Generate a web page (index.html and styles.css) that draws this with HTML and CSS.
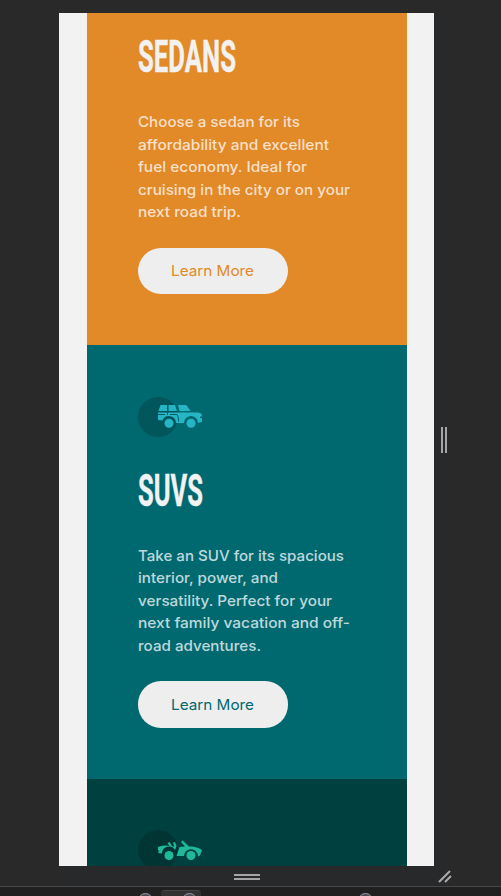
FILE: index.html
```html
<!DOCTYPE html>
<html lang="en"><head><meta charset="utf-8"><title>Car cards</title><link rel="stylesheet" href="styles.css"></head>
<body>
<div class="stage">
<main class="device">
<section class="card sedans">
<h2><svg width="120" height="40"><text x="0" y="34" textLength="98" lengthAdjust="spacingAndGlyphs">SEDANS</text></svg></h2>
<p><svg width="230" height="113"><text y="15" textLength="162" lengthAdjust="spacingAndGlyphs">Choose a sedan for its</text><text y="38" textLength="191" lengthAdjust="spacingAndGlyphs">affordability and excellent</text><text y="60" textLength="169" lengthAdjust="spacingAndGlyphs">fuel economy. Ideal for</text><text y="83" textLength="212" lengthAdjust="spacingAndGlyphs">cruising in the city or on your</text><text y="105" textLength="103" lengthAdjust="spacingAndGlyphs">next road trip.</text></svg></p>
<a class="button"><svg width="84" height="24"><text y="17" textLength="83" lengthAdjust="spacingAndGlyphs">Learn More</text></svg></a>
</section>
<section class="card suvs">
<svg class="icon" width="64" height="40"><circle cx="20" cy="20" r="20" fill="#000" fill-opacity=".18"/><g fill="#26b5c4"><path d="M22.500 8H29v6h-8.500zM30.500 8H37l2 6h-8.500zM40 8h7.500q1 0 1.500 1l3.500 5H41.500zM20 15.500H60q4 .5 4 3v1h-2v1.500h2v4l-4 1a7 7 0 0 0-14 0H38a7 7 0 0 0-13.500-2.500L20 23z"/><path d="M20 17.500h7M32 17.500h7q2 3 1.500 7M29.500 14v4" fill="none" stroke="#006068"/><circle cx="31" cy="26.300" r="4.500"/><circle cx="53" cy="26.300" r="4.500"/></g></svg>
<h2><svg width="120" height="40"><text x="0" y="34" textLength="65" lengthAdjust="spacingAndGlyphs">SUVS</text></svg></h2>
<p><svg width="230" height="113"><text y="15" textLength="206" lengthAdjust="spacingAndGlyphs">Take an SUV for its spacious</text><text y="37" textLength="140" lengthAdjust="spacingAndGlyphs">interior, power, and</text><text y="60" textLength="194" lengthAdjust="spacingAndGlyphs">versatility. Perfect for your</text><text y="82" textLength="212" lengthAdjust="spacingAndGlyphs">next family vacation and off-</text><text y="105" textLength="123" lengthAdjust="spacingAndGlyphs">road adventures.</text></svg></p>
<a class="button"><svg width="84" height="24"><text y="17" textLength="83" lengthAdjust="spacingAndGlyphs">Learn More</text></svg></a>
</section>
<section class="card luxury">
<svg class="icon" width="64" height="40"><circle cx="20" cy="20" r="20" fill="#000" fill-opacity=".18"/><g fill="#1fb99a"><path d="M20 17q4-2 7.500-1.500l4 .5-2-3 2-1 3 4.500h1.500l-1-4 2-.5 1.500 4-1.500 4a7 7 0 0 0-13 3.500L20 23l1-2-1-1zM38.500 26l3-9 5.500-.5-4-4.500 1.500-1.500L51 16.500c6 0 12 2 13 4l-2 5-2 1a7 7 0 0 0-14-.5z"/><circle cx="31" cy="25.500" r="4.500"/><circle cx="53" cy="25.500" r="4.500"/></g></svg>
</section>
</main>
<div class="side"><i></i><i></i></div>
</div>
<div class="bottom"><div class="grip"><i></i><i></i></div><svg class="corner" width="14" height="14"><path d="M1 12L12 1M7 12l6-6" stroke="#aaa" stroke-width="2"/></svg></div>
<footer><b></b><span><b></b></span><b></b></footer>
</body></html>
```
FILE: styles.css
```css
*{box-sizing:border-box}
body{margin:0;width:501px;height:896px;overflow:hidden;background:#292929;padding-top:13px;font-family:Inter,"Liberation Sans",sans-serif}
svg{display:block;overflow:visible}
.stage{display:flex;height:853px;padding-left:59px}
.device{width:375px;height:853px;overflow:hidden;background:#f2f2f2;padding:0 27px 0 28px}
.card{padding:52px 51px 51px;height:434px}
.sedans{background:#e28928;height:332px;padding-top:25px;color:#e28928}
.suvs{background:#006970;color:#006970}
.luxury{background:#004140;padding-top:51px}
.icon{margin-bottom:35px}
h2{margin:0;height:40px}
h2 text{font:700 45px Roboto,sans-serif;fill:#f2f2f2;stroke:#f2f2f2;stroke-width:.4px}
p{margin:34px 0 0;height:113px}
p text{font-size:14.7px;font-weight:500;fill:#fff;fill-opacity:.75}
.button{display:flex;align-items:center;justify-content:center;width:150px;height:46px;margin-top:23px;border-radius:23px;background:#eee}
.suvs .button{height:47px;margin-top:22px}
.button text{font-size:14.7px;fill:currentColor}
.side{width:20px;background:#28292b;display:flex;align-items:center;justify-content:center;gap:2px}
.side i{width:2px;height:26px;background:#a5a5a5}
.bottom{height:20px;margin-left:59px;width:395px;background:#28292b;display:flex;align-items:center;padding:2px 0 0 175px}
.grip{display:grid;gap:2px;width:26px;margin-right:178px}
.grip i{height:2px;background:#a5a5a5}
footer{height:10px;border-top:1px solid #484848;background:#202020;display:flex;padding:3px 0 0 138px}
footer span{width:40px;height:10px;margin-left:8px;border-radius:4px 4px 0 0;background:#323232;border-top:1px solid #444;padding-left:21px}
footer b{display:block;width:15px;height:15px;border-radius:50%;border:1px solid #999ba4;background:#484b55;flex:none}
footer>b{margin-top:3px}
footer span b{margin-top:2px}
footer>b:last-child{margin-left:157px}
```
